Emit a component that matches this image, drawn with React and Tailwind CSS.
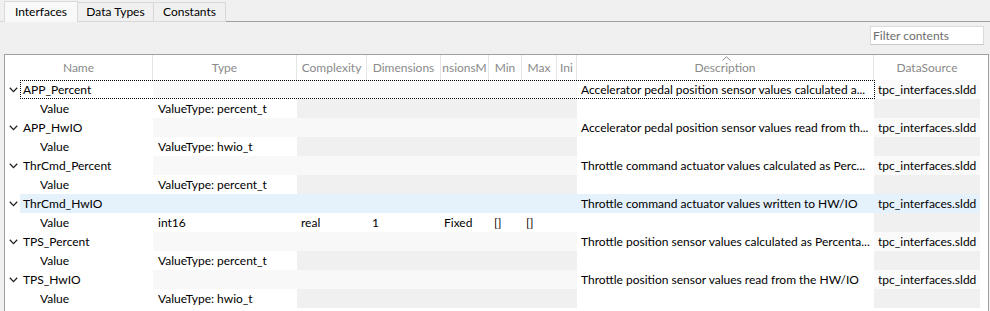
import React from "react";

const COLS = [148, 144, 70, 74, 48, 33, 35, 20, 297, 106];
const HEAD = ["Name", "Type", "Complexity", "Dimensions", "nsionsM", "Min", "Max", "Ini", "Description", "DataSource"];

const ROWS = [
  { name: "APP_Percent", type: "ValueType: percent_t", desc: "Accelerator pedal position sensor values calculated a...", focused: true },
  { name: "APP_HwIO", type: "ValueType: hwio_t", desc: "Accelerator pedal position sensor values read from th..." },
  { name: "ThrCmd_Percent", type: "ValueType: percent_t", desc: "Throttle command actuator values calculated as Perc..." },
  { name: "ThrCmd_HwIO", type: "int16", desc: "Throttle command actuator values written to HW/IO", selected: true, detail: ["real", "1", "Fixed", "[]", "[]"] },
  { name: "TPS_Percent", type: "ValueType: percent_t", desc: "Throttle position sensor values calculated as Percenta..." },
  { name: "TPS_HwIO", type: "ValueType: hwio_t", desc: "Throttle position sensor values read from the HW/IO" },
];

function Chevron() {
  return (
    <svg width="9" height="6" viewBox="0 0 9 6" className="block">
      <polyline points="0.8,0.8 4.5,4.6 8.2,0.8" fill="none" stroke="#202020" strokeWidth="1.3" />
    </svg>
  );
}

function ParentRow({ r }) {
  const sel = r.selected;
  return (
    <div className="relative flex h-[19px]">
      <div className="flex h-full w-[148px] shrink-0">
        <div className="flex h-full w-[15px] shrink-0 items-center justify-end pr-[2px] pt-[1px]">
          <Chevron />
        </div>
        <div className={sel ? "flex h-full flex-1 items-center bg-[#e5f1fb] pl-[3px]" : "flex h-full flex-1 items-center pl-[3px]"}>
          {r.name}
        </div>
      </div>
      <div className={sel ? "h-full w-[424px] shrink-0 bg-[#e5f1fb]" : "h-full w-[424px] shrink-0 bg-[#f8f8f8]"}></div>
      <div className={sel ? "flex h-full w-[297px] shrink-0 items-center overflow-hidden whitespace-nowrap bg-[#e5f1fb] pl-[4px]" : "flex h-full w-[297px] shrink-0 items-center overflow-hidden whitespace-nowrap pl-[4px]"}>
        {r.desc}
      </div>
      <div className={sel ? "flex h-full w-[106px] shrink-0 items-center overflow-hidden whitespace-nowrap bg-[#e5f1fb] pl-[4px]" : "flex h-full w-[106px] shrink-0 items-center overflow-hidden whitespace-nowrap bg-[#fafafa] pl-[4px]"}>
        tpc_interfaces.sldd
      </div>
      {r.focused && (
        <div className="pointer-events-none absolute left-[15px] top-0 h-[19px] w-[855px] border border-dotted border-black"></div>
      )}
    </div>
  );
}

function ChildRow({ r }) {
  const d = r.detail;
  return (
    <div className="flex h-[19px]">
      <div className="flex h-full w-[148px] shrink-0 items-center pl-[35px]">Value</div>
      <div className="flex h-full w-[144px] shrink-0 items-center whitespace-nowrap pl-[5px]">{r.type}</div>
      {d ? (
        <>
          <div className="flex h-full w-[70px] shrink-0 items-center pl-[4px]">{d[0]}</div>
          <div className="flex h-full w-[74px] shrink-0 items-center pl-[5px]">{d[1]}</div>
          <div className="flex h-full w-[48px] shrink-0 items-center pl-[3px]">{d[2]}</div>
          <div className="flex h-full w-[33px] shrink-0 items-center pl-[5px]">{d[3]}</div>
          <div className="flex h-full w-[35px] shrink-0 items-center pl-[4px]">{d[4]}</div>
          <div className="h-full w-[20px] shrink-0"></div>
        </>
      ) : (
        <div className="h-full w-[280px] shrink-0 bg-[#f0f0f0]"></div>
      )}
      <div className="h-full w-[297px] shrink-0"></div>
      <div className="h-full w-[106px] shrink-0 bg-[#f0f0f0]"></div>
    </div>
  );
}

export default function App() {
  return (
    <div className="h-[311px] w-[990px] overflow-hidden bg-[#f0f0f0] font-[Lato,sans-serif] text-[12px] text-black">
      {/* Tabs */}
      <div className="flex h-[22px] items-end">
        <div className="h-full w-[4px] shrink-0 border-b border-[#d9d9d9]"></div>
        <div className="flex h-[21px] w-[74px] shrink-0 items-center justify-center border border-b-0 border-[#d9d9d9] bg-[#f9f9f9] pb-[1px]">
          Interfaces
        </div>
        <div className="flex h-[20px] w-[76px] shrink-0 items-center justify-center border-b border-r border-t border-[#d9d9d9] bg-[#f0f0f0] pb-[1px]">
          Data Types
        </div>
        <div className="flex h-[20px] w-[72px] shrink-0 items-center justify-center border-b border-r border-t border-[#d9d9d9] bg-[#f0f0f0] pb-[1px]">
          Constants
        </div>
        <div className="h-full flex-1 border-b border-[#a0a0a0]"></div>
      </div>

      {/* Toolbar */}
      <div className="flex h-[32px] justify-end pr-[6px] pt-[4px]">
        <div className="flex h-[19px] w-[114px] items-center border border-[#dadada] border-b-[#c8c8c8] bg-white pl-[2px] text-[#6d6d6d]">
          Filter contents
        </div>
      </div>

      {/* Table */}
      <div className="ml-[4px] h-[300px] w-[985px] border-l border-r border-t border-[#a0a0a0] bg-white">
        {/* Header */}
        <div className="flex h-[25px] text-[#8a8a8a]">
          {HEAD.map((h, i) => (
            <div
              key={h}
              style={{ width: COLS[i] }}
              className={i < 9 ? "relative flex h-full shrink-0 items-center justify-center whitespace-nowrap border-r border-[#e5e5e5] pt-[1px]" : "relative flex h-full shrink-0 items-center justify-center whitespace-nowrap pt-[1px]"}
            >
              <span>{h}</span>
              {h === "Description" && (
                <svg width="9" height="5" viewBox="0 0 9 5" className="absolute left-[145px] top-[1px]">
                  <polyline points="0.5,4.5 4.5,0.8 8.5,4.5" fill="none" stroke="#8a8a8a" strokeWidth="1" />
                </svg>
              )}
            </div>
          ))}
        </div>
        {/* Rows */}
        {ROWS.map((r) => (
          <React.Fragment key={r.name}>
            <ParentRow r={r} />
            <ChildRow r={r} />
          </React.Fragment>
        ))}
      </div>
    </div>
  );
}
